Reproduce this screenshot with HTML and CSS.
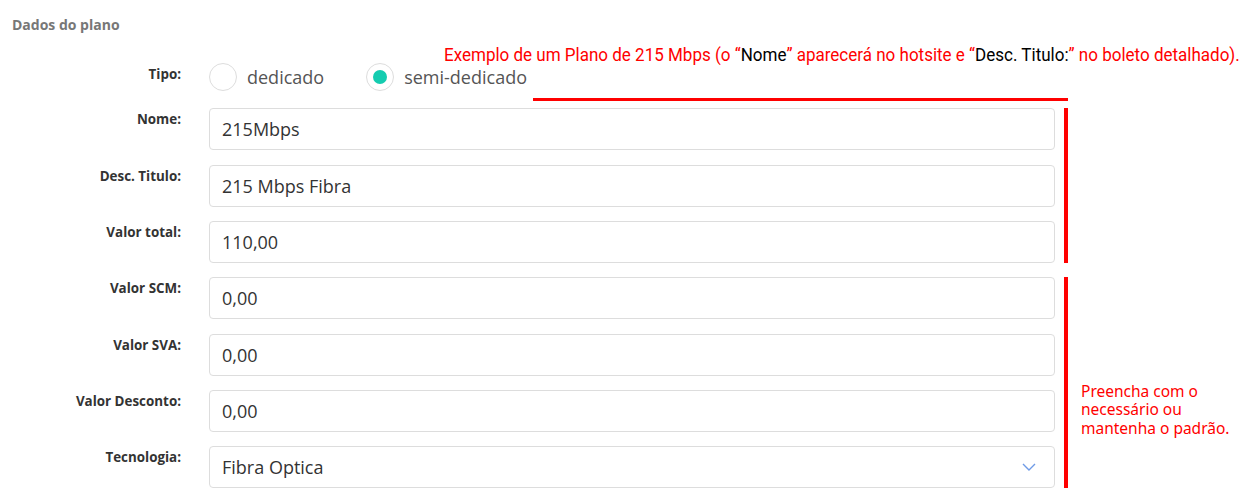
FILE: index.html
```html
<!DOCTYPE html>
<html lang="pt-BR">
<head>
  <meta charset="UTF-8" />
  <title>Dados do plano</title>
  <link rel="stylesheet" href="styles.css">
</head>
<body>
  <div class="page">
    <h4 class="section-title">Dados do plano</h4>

    <p class="hint hint-top">Exemplo de um Plano de 215 Mbps (o “<span class="black">Nome</span>” aparecerá no hotsite e “<span class="black">Desc. Titulo:</span>” no boleto detalhado).</p>
    <div class="hint-line"></div>

    <form class="plan-form">
      <label class="lbl">Tipo:</label>
      <div class="radios">
        <label class="radio"><span class="dot"></span>dedicado</label>
        <label class="radio checked"><span class="dot"></span>semi-dedicado</label>
      </div>

      <label class="lbl">Nome:</label>
      <input class="field" type="text" value="215Mbps">
      <div class="bar bar-1"></div>

      <label class="lbl">Desc. Titulo:</label>
      <input class="field" type="text" value="215 Mbps Fibra">

      <label class="lbl">Valor total:</label>
      <input class="field" type="text" value="110,00">

      <label class="lbl">Valor SCM:</label>
      <input class="field" type="text" value="0,00">
      <div class="bar bar-2"></div>

      <label class="lbl">Valor SVA:</label>
      <input class="field" type="text" value="0,00">

      <label class="lbl">Valor Desconto:</label>
      <input class="field" type="text" value="0,00">
      <p class="hint hint-side">Preencha com o necessário ou mantenha o padrão.</p>

      <label class="lbl">Tecnologia:</label>
      <div class="select-wrap">
        <select class="field">
          <option>Fibra Optica</option>
        </select>
        <svg class="chevron" width="14" height="8" viewBox="0 0 14 8">
          <path d="M1 1 L7 7 L13 1" fill="none" stroke="#6f9be6" stroke-width="1.4"/>
        </svg>
      </div>
    </form>
  </div>
</body>
</html>
```

FILE: styles.css
```css
body {
  margin: 0;
  background: #fff;
  font-family: 'Open Sans', sans-serif;
}
.page {
  position: relative;
  padding-top: 15px;
}
.section-title {
  margin: 0 0 28px 12px;
  font-size: 14px;
  line-height: 20px;
  font-weight: 700;
  color: #777;
}

/* grade: rótulo | campo | marcação | observação */
.plan-form {
  display: grid;
  grid-template-columns: 209px 855px 4px 1fr;
  grid-template-rows: 31px repeat(7, 42px);
  row-gap: 14.33px;
  margin: 0;
}
.lbl {
  grid-column: 1;
  padding: 2px 28px 0 0;
  text-align: right;
  font-size: 13.4px;
  line-height: 19px;
  font-weight: 700;
  color: #333;
}
.field {
  grid-column: 2;
  box-sizing: border-box;
  width: 846px;
  height: 42px;
  padding: 0 12px;
  border: 1px solid #ddd;
  border-radius: 4px;
  background: #fff;
  font-family: 'Open Sans', sans-serif;
  font-size: 18px;
  color: #333;
  outline: none;
}
select.field {
  appearance: none;
  -webkit-appearance: none;
}
.select-wrap {
  grid-column: 2;
  position: relative;
}
.chevron {
  position: absolute;
  left: 813px;
  top: 17px;
}

.radios {
  grid-column: 2;
  display: flex;
  gap: 42px;
  align-items: flex-start;
}
.radio {
  display: flex;
  align-items: center;
  gap: 10px;
  font-size: 18px;
  line-height: 28px;
  color: #555;
}
.dot {
  box-sizing: border-box;
  width: 28px;
  height: 28px;
  border: 1px solid #ddd;
  border-radius: 50%;
  display: flex;
  align-items: center;
  justify-content: center;
}
.checked .dot::after {
  content: "";
  width: 14px;
  height: 14px;
  border-radius: 50%;
  background: #14ccb0;
}

/* marcações em vermelho */
.bar {
  grid-column: 3;
  background: #ff0000;
}
.bar-1 { grid-row: 2 / span 3; }
.bar-2 { grid-row: 5 / span 4; }

.hint {
  margin: 0;
  color: #ff0000;
}
.hint .black { color: #000; }
.hint-top {
  position: absolute;
  left: 444px;
  top: 45px;
  font-family: 'Roboto', sans-serif;
  font-size: 18px;
  line-height: 20px;
  white-space: nowrap;
  transform: scaleX(0.945);
  transform-origin: left top;
}
.hint-line {
  position: absolute;
  left: 533px;
  top: 98px;
  width: 535px;
  height: 3px;
  background: #ff0000;
}
.hint-side {
  grid-column: 4;
  grid-row: 7 / span 2;
  margin-top: -8px;
  padding-left: 13px;
  font-family: 'Noto Sans', sans-serif;
  font-size: 15.5px;
  line-height: 18.5px;
  width: 170px;
}
```
